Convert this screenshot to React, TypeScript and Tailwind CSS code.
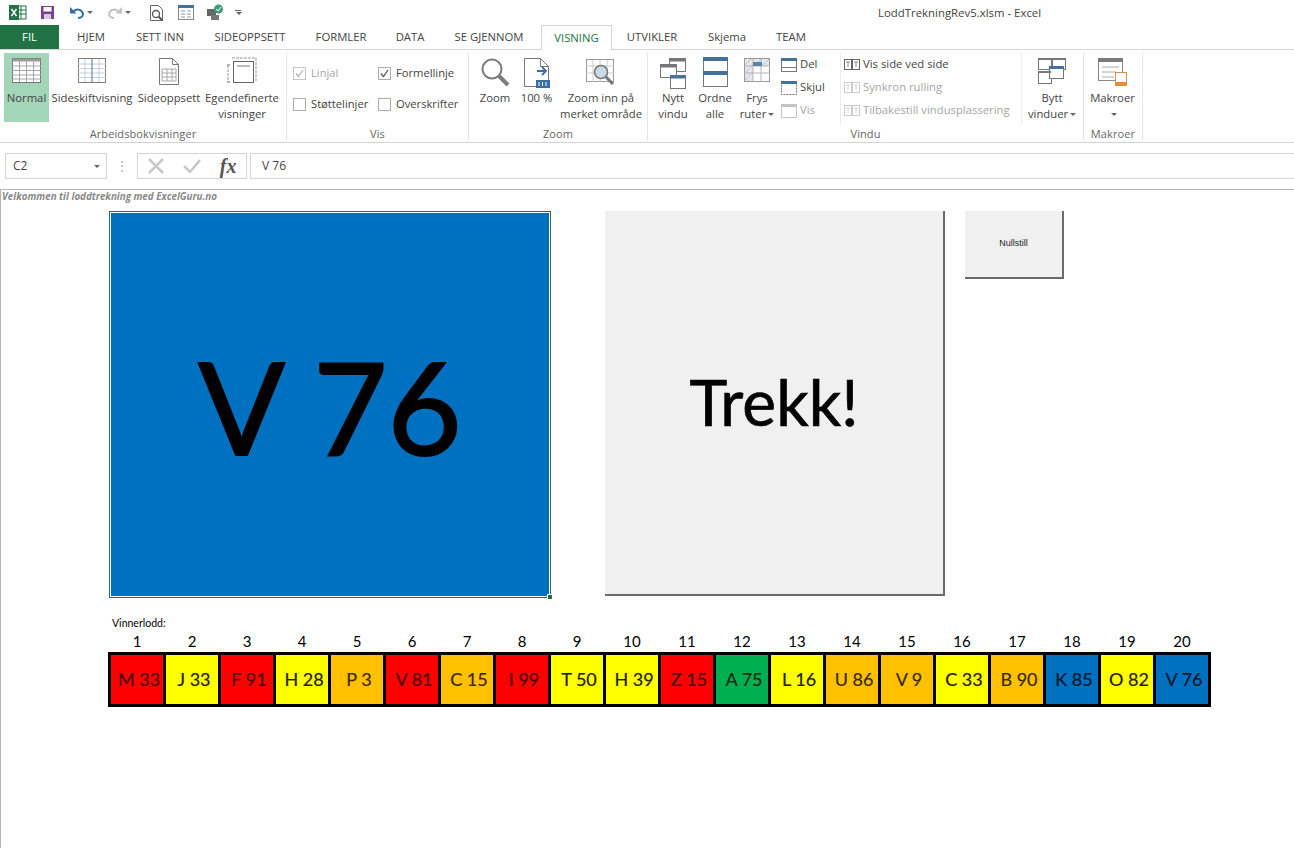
import type { ReactNode } from "react";

const tabs = [
  { name: "HJEM", w: "w-[64px]" },
  { name: "SETT INN", w: "w-[74px]" },
  { name: "SIDEOPPSETT", w: "w-[106px]" },
  { name: "FORMLER", w: "w-[76px]" },
  { name: "DATA", w: "w-[62px]" },
  { name: "SE GJENNOM", w: "w-[96px]" },
];

const tabsAfter = [
  { name: "UTVIKLER", w: "w-[80px]" },
  { name: "Skjema", w: "w-[70px]" },
  { name: "TEAM", w: "w-[58px]" },
];

const red = "bg-[#ff0000] text-[#4a0000]";
const yellow = "bg-[#ffff00] text-[#222200]";
const orange = "bg-[#ffc000] text-[#3a2a00]";
const green = "bg-[#00b050] text-[#002a10]";
const blue = "bg-[#0070c0] text-[#001528]";

const lodd = [
  { t: "M 33", c: red },
  { t: "J 33", c: yellow },
  { t: "F 91", c: red },
  { t: "H 28", c: yellow },
  { t: "P 3", c: orange },
  { t: "V 81", c: red },
  { t: "C 15", c: orange },
  { t: "I 99", c: red },
  { t: "T 50", c: yellow },
  { t: "H 39", c: yellow },
  { t: "Z 15", c: red },
  { t: "A 75", c: green },
  { t: "L 16", c: yellow },
  { t: "U 86", c: orange },
  { t: "V 9", c: orange },
  { t: "C 33", c: yellow },
  { t: "B 90", c: orange },
  { t: "K 85", c: blue },
  { t: "O 82", c: yellow },
  { t: "V 76", c: blue },
];

const Caret = () => <span className="ml-[2px] inline-block h-0 w-0 border-x-[3px] border-t-[3px] border-x-transparent border-t-[#666] align-middle" />;

const Group = ({ label, className, children }: { label: string; className: string; children: ReactNode }) => (
  <div className={`flex h-[88px] shrink-0 flex-col border-r border-[#e6e6e6] ${className}`}>
    <div className="flex h-[72px] items-start">{children}</div>
    <div className="mt-[1px] text-center text-[11px] leading-[15px] tracking-[0.1px] text-[#666]">{label}</div>
  </div>
);

const Big = ({ w, icon, lines }: { w: string; icon: ReactNode; lines: ReactNode[] }) => (
  <div className={`flex shrink-0 flex-col items-center ${w}`}>
    <div className="flex h-[37px] w-full items-start justify-center pt-[4px]">{icon}</div>
    {lines.map((l, i) => (
      <div key={i} className="whitespace-nowrap text-[11.3px] leading-[16px] text-[#444]">
        {l}
      </div>
    ))}
  </div>
);

const Check = ({ label, checked, off, w }: { label: string; checked?: boolean; off?: boolean; w: string }) => (
  <div className={`flex h-[16px] items-center ${w}`}>
    <div className={`mr-[5px] flex h-[13px] w-[13px] items-center justify-center border ${off ? "border-[#c6c6c6]" : "border-[#ababab]"}`}>
      {checked && (
        <svg width="11" height="11" viewBox="0 0 11 11">
          <path d="M2 5.5 L4.5 8.5 L9 2" fill="none" stroke={off ? "#b5b5b5" : "#555"} strokeWidth="1.3" />
        </svg>
      )}
    </div>
    <span className={`whitespace-nowrap text-[11.2px] ${off ? "text-[#a6a6a6]" : "text-[#444]"}`}>{label}</span>
  </div>
);

const SmallRow = ({ icon, label, off }: { icon: ReactNode; label: string; off?: boolean }) => (
  <div className={`flex h-[23px] items-center gap-[3px] whitespace-nowrap text-[11.3px] ${off ? "text-[#a6a6a6]" : "text-[#444]"}`}>
    {icon}
    <span>{label}</span>
  </div>
);

const GridIcon = () => (
  <svg width="31" height="27" viewBox="0 0 31 27">
    <rect x="1.5" y="1.5" width="28" height="24" fill="#fff" stroke="#777" />
    <rect x="1.5" y="1.5" width="28" height="3" fill="#999" />
    <path d="M1 9h29M1 13.500h29M1 18h29M1 22h29M8.500 2v23M15.500 2v23M22.500 2v23" stroke="#a5a5a5" strokeWidth="1" />
  </svg>
);

const PageBreakIcon = () => (
  <svg width="30" height="27" viewBox="0 0 30 27">
    <rect x="1.5" y="1.500" width="27" height="24" fill="#fff" stroke="#7a7a7a" />
    <path d="M1 7h28M1 11.500h28M1 16h28M1 20.500h28M8 2v23M22 2v23" stroke="#c5cfdf" />
    <path d="M15 1v25" stroke="#6c87ab" strokeWidth="1.200" />
  </svg>
);

const PageIcon = () => (
  <svg width="22" height="29" viewBox="0 0 22 29">
    <path d="M1.500 1.500h13l6 6v20h-19z" fill="#fff" stroke="#777" />
    <path d="M14.500 1.500v6h6" fill="none" stroke="#777" />
    <path d="M4 12h14v12H4zM4 16h14M4 20h14M9 12v12M14 12v12" fill="none" stroke="#aaa" />
  </svg>
);

const CustomIcon = () => (
  <svg width="30" height="29" viewBox="0 0 30 29">
    <path d="M5 1h24v23M1 8v17" fill="none" stroke="#999" strokeDasharray="3 1" />
    <rect x="6.500" y="4.500" width="20" height="21" fill="#fff" stroke="#666" />
    <rect x="10" y="8" width="13" height="2" fill="#bbb" />
    <path d="M0 8h3M0 25h3" stroke="#777" />
  </svg>
);

const LensIcon = () => (
  <svg width="30" height="30" viewBox="0 0 30 30">
    <circle cx="12" cy="12" r="9.500" fill="#fff" stroke="#7c7c7c" strokeWidth="2" />
    <path d="M19 19l9 9" stroke="#7c7c7c" strokeWidth="4" />
  </svg>
);

const HundredIcon = () => (
  <svg width="28" height="32" viewBox="0 0 28 32">
    <path d="M1.500 1.500h16l8 8v20h-24z" fill="#fff" stroke="#777" />
    <path d="M17.500 1.500v8h8" fill="none" stroke="#777" />
    <path d="M14 14h8m-3-4l4 4-4 4" fill="none" stroke="#3b6ea5" strokeWidth="1.800" />
    <rect x="13" y="23" width="14" height="8" fill="#3b6ea5" />
    <path d="M16 25v4M19.500 25v4M23 25v4" stroke="#fff" />
  </svg>
);

const ZoomSelIcon = () => (
  <svg width="32" height="32" viewBox="0 0 32 32">
    <rect x="1.500" y="2.500" width="27" height="22" fill="#fff" stroke="#999" />
    <path d="M1 9h28M1 16h28M8 3v22M15 3v22M22 3v22" stroke="#ccc" />
    <circle cx="16" cy="15" r="6.500" fill="#cbd8e8" stroke="#777" strokeWidth="1.500" />
    <path d="M21 20l7 7" stroke="#777" strokeWidth="3" />
  </svg>
);

const WindowsIcon = () => (
  <svg width="28" height="32" viewBox="0 0 28 32">
    <rect x="10.500" y="1.500" width="16" height="13" fill="#fff" stroke="#777" />
    <rect x="10.500" y="1.500" width="16" height="3" fill="#777" />
    <rect x="1.500" y="7.500" width="16" height="13" fill="#fff" stroke="#777" />
    <rect x="1.500" y="7.500" width="16" height="3" fill="#777" />
    <rect x="11.500" y="18.500" width="15" height="13" fill="#fff" stroke="#777" />
    <rect x="11.500" y="18.500" width="15" height="3" fill="#41719c" />
  </svg>
);

const ArrangeIcon = () => (
  <svg width="25" height="30" viewBox="0 0 25 30">
    <rect x="0.500" y="0.500" width="24" height="29" fill="#fff" stroke="#777" />
    <rect x="0" y="0" width="25" height="4" fill="#41719c" />
    <rect x="0" y="14" width="25" height="4" fill="#41719c" />
  </svg>
);

const FreezeIcon = () => (
  <svg width="28" height="27" viewBox="0 0 28 27">
    <rect x="1.500" y="1.500" width="25" height="23" fill="#fff" stroke="#999" />
    <rect x="2" y="2" width="24" height="7" fill="#e3e6ea" />
    <rect x="2" y="2" width="8" height="22" fill="#e3e6ea" />
    <path d="M2 8l6-6M2 16l8-8M2 23l8-8M12 8l6-6M20 8l6-6" stroke="#bfc5cc" />
    <path d="M1 9h26M1 16h26M10 2v23M18 2v23" stroke="#b5b5b5" />
    <rect x="10" y="5" width="9" height="4" fill="#5b82ad" />
  </svg>
);

const SplitIcon = ({ off, dashed }: { off?: boolean; dashed?: boolean }) => (
  <svg width="16" height="14" viewBox="0 0 16 14">
    <rect x="0.500" y="0.500" width="15" height="13" fill="#fff" stroke={off ? "#c4c4c4" : "#777"} strokeDasharray={dashed ? "2 1" : undefined} />
    <rect x="0" y="0" width="16" height="3" fill={off ? "#c4c4c4" : "#41719c"} />
    {!off && !dashed && <path d="M0 9.500h16" stroke="#777" />}
  </svg>
);

const SideIcon = ({ off }: { off?: boolean }) => (
  <svg width="16" height="13" viewBox="0 0 16 13">
    <rect x="0.500" y="1.500" width="7" height="10" fill="#fff" stroke={off ? "#ccc" : "#666"} />
    <rect x="8.500" y="1.500" width="7" height="10" fill="#fff" stroke={off ? "#ccc" : "#666"} />
    <path d="M2 4h4M4 4v5M10 4h4M12 4v5" stroke={off ? "#d4d4d4" : "#888"} />
  </svg>
);

const SwitchIcon = () => (
  <svg width="30" height="28" viewBox="0 0 30 28">
    <rect x="1.500" y="1.500" width="13" height="11" fill="#fff" stroke="#777" />
    <rect x="15.500" y="1.500" width="13" height="11" fill="#fff" stroke="#777" />
    <rect x="1.500" y="14.500" width="13" height="12" fill="#fff" stroke="#777" />
    <rect x="12.500" y="9.500" width="14" height="12" fill="#fff" stroke="#777" />
    <rect x="12" y="9" width="15" height="3" fill="#41719c" />
    <path d="M2 2h12M16 2h12M2 15h12" stroke="#777" strokeWidth="2" />
  </svg>
);

const MacroIcon = () => (
  <svg width="32" height="30" viewBox="0 0 32 30">
    <rect x="1.500" y="1.500" width="24" height="22" fill="#fff" stroke="#888" />
    <rect x="1" y="1" width="25" height="4" fill="#7b7b7b" />
    <path d="M5 10h17M5 15h14M5 20h12" stroke="#aaa" />
    <rect x="18.500" y="15.500" width="11" height="11" fill="#fff" stroke="#d98b4a" />
    <rect x="18" y="25" width="12" height="4" fill="#e48b3c" />
  </svg>
);

export default function App() {
  return (
    <div className="relative h-[848px] w-[1294px] overflow-hidden bg-white font-['Open_Sans',sans-serif] text-[#444]">
      {/* tittellinje */}
      <div className="flex h-[25px] items-center pl-[9px]">
        <svg width="18" height="17" viewBox="0 0 18 17">
          <rect x="7" y="2" width="10" height="13" fill="#fff" stroke="#217346" />
          <path d="M7 6h10M7 10h10M12 2v13" stroke="#217346" />
          <rect x="0" y="1" width="10" height="15" fill="#217346" />
          <path d="M2.500 5l5 7M7.500 5l-5 7" stroke="#fff" strokeWidth="1.500" />
        </svg>
        <svg className="ml-[13px]" width="15" height="15" viewBox="0 0 15 15">
          <path d="M1 1h13v13H1z" fill="#7a3e92" />
          <rect x="3.500" y="2" width="8" height="4.500" fill="#fff" />
          <rect x="4" y="9" width="7" height="5" fill="#d9c7e2" />
        </svg>
        <svg className="ml-[14px]" width="16" height="14" viewBox="0 0 16 14">
          <path d="M4 6c3-4 9-3 10 2 0 2-2 4-5 4" fill="none" stroke="#2e6ea8" strokeWidth="2" />
          <path d="M1 1v6.500h6.500z" fill="#2e6ea8" />
        </svg>
        <Caret />
        <svg className="ml-[14px]" width="16" height="14" viewBox="0 0 16 14">
          <path d="M12 6c-3-4-9-3-10 2 0 2 2 4 5 4" fill="none" stroke="#c2c2c2" strokeWidth="2" />
          <path d="M15 1v6.500H8.500z" fill="#c2c2c2" />
        </svg>
        <Caret />
        <svg className="ml-[18px]" width="16" height="18" viewBox="0 0 16 18">
          <path d="M1.500 1.500h8l4 4v11h-12z" fill="#fff" stroke="#666" />
          <circle cx="7" cy="10" r="3.500" fill="#fff" stroke="#555" strokeWidth="1.300" />
          <path d="M9.500 12.500l4 4" stroke="#555" strokeWidth="2" />
        </svg>
        <svg className="ml-[13px]" width="16" height="15" viewBox="0 0 16 15">
          <rect x="0.500" y="0.500" width="15" height="14" fill="#fff" stroke="#888" />
          <rect x="0" y="0" width="16" height="3" fill="#41719c" />
          <path d="M3 6h4M3 9h4M3 12h4M9 6h4M9 9h4M9 12h4" stroke="#999" />
        </svg>
        <svg className="ml-[13px]" width="17" height="17" viewBox="0 0 17 17">
          <rect x="0" y="5" width="9" height="7" fill="#666" />
          <rect x="4" y="11" width="8" height="5" fill="#777" />
          <circle cx="11.500" cy="5" r="4.500" fill="#3f9c77" />
          <path d="M9 5l2 2 3-4" fill="none" stroke="#fff" />
        </svg>
        <span className="ml-[10px] flex flex-col items-center gap-[1px]">
          <span className="h-[1px] w-[6px] bg-[#666]" />
          <Caret />
        </span>
        <span className="ml-[636px] whitespace-nowrap text-[11.4px] text-[#444]">LoddTrekningRev5.xlsm - Excel</span>
      </div>

      {/* faner */}
      <div className="flex h-[25px] border-b border-[#d4d4d4] text-[11.3px]">
        <div className="flex h-[24px] w-[59px] items-center justify-center bg-[#217346] text-white">FIL</div>
        {tabs.map((t) => (
          <div key={t.name} className={`flex items-center justify-center whitespace-nowrap ${t.w}`}>
            {t.name}
          </div>
        ))}
        <div className="relative z-10 ml-[4px] flex h-[25px] w-[71px] items-center justify-center border-x border-t border-[#d4d4d4] bg-white text-[#217346]">
          VISNING
        </div>
        {tabsAfter.map((t) => (
          <div key={t.name} className={`flex items-center justify-center whitespace-nowrap ${t.w}`}>
            {t.name}
          </div>
        ))}
      </div>

      {/* bånd */}
      <div className="flex h-[93px] border-b border-[#d4d4d4] pt-[3px]">
        <Group label="Arbeidsbokvisninger" className="w-[287px]">
          <div className="ml-[4px] h-[69px] w-[45px] shrink-0 bg-[#a3d5b9]">
            <Big w="w-[45px]" icon={<GridIcon />} lines={["Normal"]} />
          </div>
          <Big w="ml-[2px] w-[82px]" icon={<PageBreakIcon />} lines={["Sideskiftvisning"]} />
          <Big w="ml-[5px] w-[62px]" icon={<PageIcon />} lines={["Sideoppsett"]} />
          <Big w="ml-[5px] w-[74px]" icon={<CustomIcon />} lines={["Egendefinerte", "visninger"]} />
        </Group>

        <Group label="Vis" className="w-[182px]">
          <div className="flex flex-wrap gap-y-[15px] pl-[6px] pt-[12px]">
            <Check label="Linjal" checked off w="w-[85px]" />
            <Check label="Formellinje" checked w="w-[88px]" />
            <Check label="Støttelinjer" w="w-[85px]" />
            <Check label="Overskrifter" w="w-[88px]" />
          </div>
        </Group>

        <Group label="Zoom" className="w-[179px]">
          <Big w="ml-[5px] w-[42px]" icon={<LensIcon />} lines={["Zoom"]} />
          <Big w="w-[41px]" icon={<HundredIcon />} lines={["100 %"]} />
          <Big w="ml-[1px] w-[86px]" icon={<ZoomSelIcon />} lines={["Zoom inn på", "merket område"]} />
        </Group>

        <Group label="Vindu" className="w-[436px]">
          <div className="flex h-[72px] w-[374px] shrink-0 border-r border-[#ececec]">
            <Big w="ml-[4px] w-[42px]" icon={<WindowsIcon />} lines={["Nytt", "vindu"]} />
            <Big w="w-[42px]" icon={<ArrangeIcon />} lines={["Ordne", "alle"]} />
            <Big
              w="w-[42px]"
              icon={<FreezeIcon />}
              lines={[
                "Frys",
                <>
                  ruter
                  <Caret />
                </>,
              ]}
            />
            <div className="ml-[3px] w-[59px]">
              <SmallRow icon={<SplitIcon />} label="Del" />
              <SmallRow icon={<SplitIcon dashed />} label="Skjul" />
              <SmallRow icon={<SplitIcon off />} label="Vis" off />
            </div>
            <div className="border-l border-[#ececec] pl-[3px]">
              <SmallRow icon={<SideIcon />} label="Vis side ved side" />
              <SmallRow icon={<SideIcon off />} label="Synkron rulling" off />
              <SmallRow icon={<SideIcon off />} label="Tilbakestill vindusplassering" off />
            </div>
          </div>
          <Big
            w="ml-[6px] w-[48px]"
            icon={<SwitchIcon />}
            lines={[
              "Bytt",
              <>
                vinduer
                <Caret />
              </>,
            ]}
          />
        </Group>

        <Group label="Makroer" className="w-[59px]">
          <Big w="w-[57px]" icon={<MacroIcon />} lines={["Makroer", <Caret />]} />
        </Group>
      </div>

      {/* formellinje */}
      <div className="mt-[10px] flex h-[26px] items-stretch text-[12px]">
        <div className="ml-[5px] flex w-[102px] items-center justify-between border border-[#d4d4d4] pl-[7px] pr-[6px]">
          C2
          <Caret />
        </div>
        <div className="flex w-[30px] items-center justify-center text-[#aaa]">⋮</div>
        <div className="flex w-[110px] items-center justify-around border border-[#d4d4d4]">
          <svg width="16" height="16" viewBox="0 0 16 16">
            <path d="M1 1l14 14M15 1L1 15" stroke="#c8c8c8" strokeWidth="2.500" />
          </svg>
          <svg width="18" height="16" viewBox="0 0 18 16">
            <path d="M1 8l6 6L17 2" fill="none" stroke="#c8c8c8" strokeWidth="2.500" />
          </svg>
          <span className="font-['Liberation_Serif',serif] text-[20px] font-bold italic leading-none text-[#555]">fx</span>
        </div>
        <div className="ml-[3px] flex flex-1 items-center border-y border-l border-[#d4d4d4] pl-[11px]">V 76</div>
      </div>

      {/* regneark */}
      <div className="mt-[10px] h-[659px] border-l border-t border-[#b5b5b5]">
        <div className="pl-[1px] text-[9.8px] font-bold italic leading-[14px] text-[#8a8a8a]">Velkommen til loddtrekning med ExcelGuru.no</div>

        <div className="ml-[108px] mt-[7px] flex items-start font-['Lato',sans-serif] text-black">
          <div className="relative flex h-[387px] w-[442px] items-center justify-center border border-[#217346] bg-[#0070c0] outline outline-1 -outline-offset-2 outline-white">
            <span className="mt-[3px] text-[128px] leading-none [-webkit-text-stroke:2px_black]">V 76</span>
            <span className="absolute -bottom-[3px] -right-[3px] h-[6px] w-[6px] border border-white bg-[#217346]" />
          </div>
          <div className="ml-[54px] flex h-[385px] w-[340px] items-center justify-center border-b-2 border-r-2 border-[#6b6b6b] bg-[#f0f0f0] pb-[2px]">
            <span className="text-[64px] leading-none [-webkit-text-stroke:0.7px_black]">Trekk!</span>
          </div>
          <div className="ml-[20px] flex h-[68px] w-[99px] items-center justify-center border-b-2 border-r-2 border-[#6b6b6b] bg-[#f0f0f0] font-['Liberation_Sans',sans-serif] text-[9px] text-[#222]">
            Nullstill
          </div>
        </div>

        <div className="ml-[107px] mt-[18px] w-[1103px] font-['Lato',sans-serif] text-black">
          <div className="pl-[4px] text-[10.5px] leading-[14px]">Vinnerlodd:</div>
          <div className="mt-[1px] grid grid-cols-[repeat(20,52px)] gap-x-[3px] px-[3px] text-center text-[15px] leading-[20px]">
            {lodd.map((_, i) => (
              <div key={i}>{i + 1}</div>
            ))}
          </div>
          <div className="mt-[1px] grid grid-cols-[repeat(20,52px)] gap-[3px] bg-black p-[3px]">
            {lodd.map((l, i) => (
              <div key={i} className={`flex h-[49px] items-center justify-center whitespace-nowrap pl-[4px] text-[18px] [-webkit-text-stroke:0.2px_currentColor] ${l.c}`}>
                {l.t}
              </div>
            ))}
          </div>
        </div>
      </div>
    </div>
  );
}
